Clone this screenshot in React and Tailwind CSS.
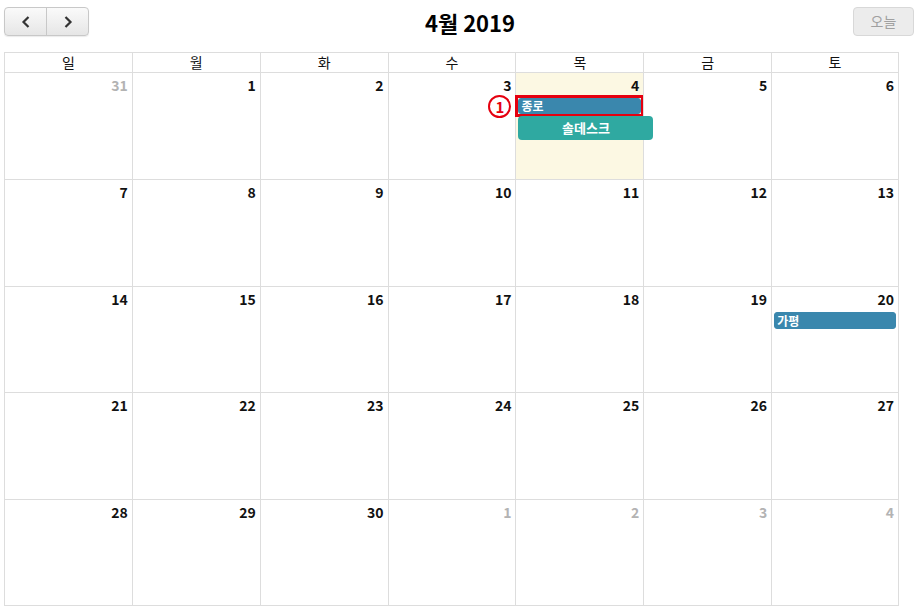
import React from "react";

const font = { fontFamily: '"Noto Sans CJK KR", "Noto Sans", sans-serif' };

const days = ["일", "월", "화", "수", "목", "금", "토"];
const weeks = [
  [[31, true], [1], [2], [3], [4], [5], [6]],
  [[7], [8], [9], [10], [11], [12], [13]],
  [[14], [15], [16], [17], [18], [19], [20]],
  [[21], [22], [23], [24], [25], [26], [27]],
  [[28], [29], [30], [1, true], [2, true], [3, true], [4, true]],
];
const rowH = ["h-[107px]", "h-[107px]", "h-[106px]", "h-[107px]", "h-[106px]"];

function Chevron({ dir }) {
  return (
    <svg width="12" height="14" viewBox="0 0 12 14">
      <path
        d={dir === "l" ? "M8.5 2 L3.5 7 L8.5 12" : "M3.5 2 L8.5 7 L3.5 12"}
        fill="none"
        stroke="#333"
        strokeWidth="2.2"
      />
    </svg>
  );
}

function Cell({ n, other, wi, di }) {
  const today = wi === 0 && di === 4;
  return (
    <div
      className={`relative border-l border-[#ddd] ${di === 6 ? "border-r" : ""} ${
        today ? "bg-[#fcf8e3]" : "bg-white"
      }`}
    >
      <div
        className={`text-right pr-[4px] pt-[2px] text-[14px] leading-[20px] font-semibold ${
          other ? "text-[#b3b3b3] font-normal" : "text-[#111]"
        }`}
      >
        {n}
      </div>
      {wi === 0 && di === 4 && (
        <>
          <div className="relative mx-[2px] mt-[3px]">
            <div className="absolute left-[-3px] right-[-3px] top-[-3px] bottom-[-3px] border-[3px] border-[#e5000f]" />
            <div className="absolute left-[-30px] top-[-3px] w-[23px] h-[23px] rounded-full border-[2px] border-[#e5000f] bg-white flex items-center justify-center text-[15px] font-bold text-[#e5000f] leading-none">
              1
            </div>
            <div className="h-[16px] bg-[#3a87ad] border border-[#3a87ad] rounded-[3px] text-white text-[12px] font-bold leading-[14px] pl-[2px]">
              종로
            </div>
          </div>
          <div className="absolute left-[2px] top-[43px] w-[135px] h-[24px] bg-[#2fa9a1] rounded-[4px] text-white text-[13px] font-bold flex items-center justify-center z-10">
            솔데스크
          </div>
        </>
      )}
      {wi === 2 && di === 6 && (
        <div className="mx-[2px] mt-[3px] h-[17px] bg-[#3a87ad] border border-[#3a87ad] rounded-[3px] text-white text-[12px] font-bold leading-[15px] pl-[2px]">
          가평
        </div>
      )}
    </div>
  );
}

export default function App() {
  return (
    <div className="w-[924px] h-[610px] bg-white overflow-hidden" style={font}>
      <div className="flex items-center justify-between pl-[4px] pr-[10px] pt-[7px] h-[52px] items-start relative">
        <div className="flex h-[29px] rounded-[4px] border border-[#c8c8c8] bg-gradient-to-b from-[#fafafa] to-[#e6e6e6] shadow-[0_1px_1px_rgba(0,0,0,0.08)]">
          <div className="w-[42px] flex items-center justify-center border-r border-[#c8c8c8]">
            <Chevron dir="l" />
          </div>
          <div className="w-[41px] flex items-center justify-center">
            <Chevron dir="r" />
          </div>
        </div>
        <div className="absolute left-[16px] right-0 top-[6px] text-center text-[22px] font-bold text-black leading-[32px]">
          4월 2019
        </div>
        <div className="w-[61px] h-[29px] rounded-[4px] border border-[#d8d8d8] bg-[#ececec] flex items-center justify-center text-[14px] text-[#a0a0a0]">
          오늘
        </div>
      </div>
      <div className="ml-[4px] w-[895px]">
        <div className="grid grid-cols-7 border-t border-[#ddd]">
          {days.map((d, i) => (
            <div
              key={d}
              className={`h-[19px] border-l border-[#ddd] ${i === 6 ? "border-r" : ""} text-center text-[14px] leading-[19px] text-[#111]`}
            >
              {d}
            </div>
          ))}
        </div>
        {weeks.map((w, wi) => (
          <div key={wi} className={`grid grid-cols-7 border-t border-[#ddd] ${rowH[wi]}`}>
            {w.map(([n, other], di) => (
              <Cell key={di} n={n} other={other} wi={wi} di={di} />
            ))}
          </div>
        ))}
        <div className="border-t border-[#ddd]" />
      </div>
    </div>
  );
}
